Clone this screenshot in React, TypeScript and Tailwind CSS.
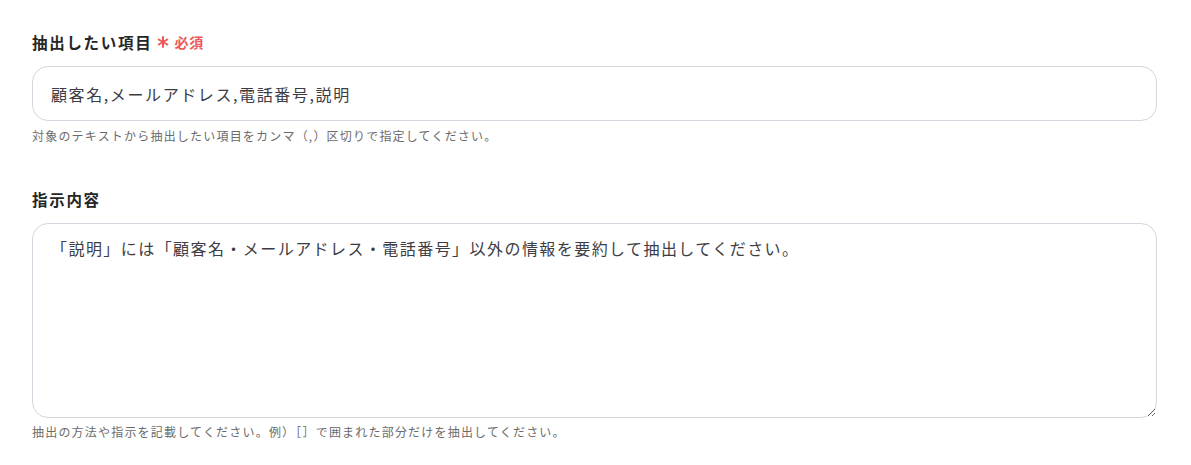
import React from "react";

export default function App() {
  const font = { fontFamily: '"Noto Sans CJK JP", "Noto Sans", sans-serif' };
  return (
    <div className="w-[1191px] h-[465px] bg-white px-[32px] pt-[29px] text-[#262626]" style={font}>
      <div className="w-[1125px]">
        <div className="flex items-center h-[26px]">
          <span className="text-[15.5px] font-bold leading-[26px] tracking-[0.11em]">抽出したい項目</span>
          <svg className="ml-[5px]" width="12" height="12" viewBox="0 0 12 12">
            <g stroke="#ec5a5a" strokeWidth="2" strokeLinecap="round">
              <line x1="6" y1="1" x2="6" y2="11" />
              <line x1="1.7" y1="3.5" x2="10.3" y2="8.5" />
              <line x1="1.7" y1="8.5" x2="10.3" y2="3.5" />
            </g>
          </svg>
          <span className="ml-[5px] text-[#ec5a5a] text-[14px] font-bold leading-[26px] tracking-[0.06em]">必須</span>
        </div>
        <div className="mt-[11px] h-[55px] rounded-[16px] border border-[#d5d5de] bg-white flex items-center px-[18px]">
          <span className="text-[16px] tracking-[0.1em] text-[#3d3d45]">顧客名,メールアドレス,電話番号,説明</span>
        </div>
        <div className="mt-[6px] text-[12px] leading-[18px] tracking-[0.1em] text-[#6b6b6b]">
          対象のテキストから抽出したい項目をカンマ（,）区切りで指定してください。
        </div>

        <div className="mt-[41px] h-[26px] flex items-center">
          <span className="text-[15.5px] font-bold leading-[26px] tracking-[0.11em]">指示内容</span>
        </div>
        <textarea
          className="mt-[11px] block w-full h-[195px] rounded-[16px] border border-[#d5d5de] bg-white px-[18px] pt-[12px] text-[16px] leading-[24px] tracking-[0.09em] text-[#3d3d45] outline-none"
          style={font}
          defaultValue="「説明」には「顧客名・メールアドレス・電話番号」以外の情報を要約して抽出してください。"
        />
        <div className="mt-[5px] text-[12px] leading-[18px] tracking-[0.1em] text-[#6b6b6b]">
          抽出の方法や指示を記載してください。例）［］で囲まれた部分だけを抽出してください。
        </div>
      </div>
    </div>
  );
}
